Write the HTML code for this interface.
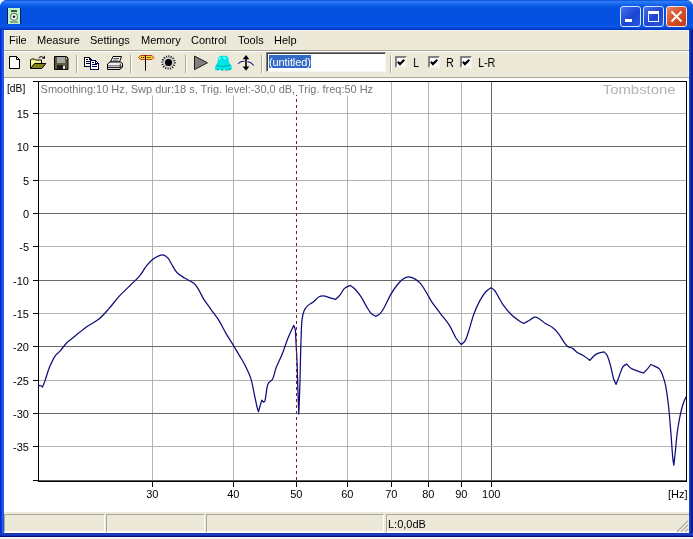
<!DOCTYPE html>
<html><head><meta charset="utf-8">
<style>
html,body{margin:0;padding:0;background:#f2f3fe;}
body{width:693px;height:539px;position:relative;overflow:hidden;font-family:"Liberation Sans",sans-serif;font-size:11px;color:#000;}
.abs{position:absolute;}
#win{left:0;top:0;width:693px;height:537px;background:linear-gradient(to right,#0424d4 0,#0424d4 1.300px,#2060f0 2px,#2060f0 3.200px,#1848c0 4px,#1848c0 688px,#2448c4 689px,#2040c0 690px,#0c20ac 691px,#0818a0 693px);border-radius:7px 7px 0 0;overflow:hidden;}
#title{left:0;top:0;width:693px;height:30px;background:linear-gradient(to bottom,#0a4cd6 0,#2a7af8 1.500px,#2272f4 3px,#0858e6 6px,#0450e0 9px,#0450e0 23px,#0856e8 26.500px,#0644d0 28.500px,#0030b0 30px);}
#client{left:4px;top:30px;width:685px;height:503px;background:#ece9d8;}
#menu{position:absolute;left:0;top:0;width:693px;height:52px;will-change:transform}
#menu span{position:absolute;top:34px;font-size:11px;white-space:nowrap;}
.btn{position:absolute;top:6px;width:19px;height:19px;border:1px solid #fff;border-radius:3px;}
#chart{left:4px;top:78px;width:685px;height:434px;background:#fff;}
.sp{position:absolute;top:514px;height:16px;border-top:1px solid #aca899;border-left:1px solid #aca899;border-right:1px solid #fff;border-bottom:2px solid #fff;box-sizing:content-box}
.sep{position:absolute;top:55px;width:1px;height:18px;background:#aca899;border-right:1px solid #fff;}
.cb{position:absolute;top:56px;width:8px;height:8px;background:#fff;border-top:2px solid;border-left:2px solid;border-right:2px solid;border-bottom:2px solid;border-color:#808080 #f4f2e8 #f4f2e8 #808080;}
.cb svg{position:absolute;left:0;top:0}
.cl{will-change:transform;position:absolute;top:56px;font-size:12.500px;line-height:14px;transform:scaleX(0.860);transform-origin:0 0;white-space:nowrap}
svg{will-change:transform}
svg text{font-family:"Liberation Sans",sans-serif;font-size:11px;fill:#000;}
</style></head><body>
<div id="win" class="abs">
<div id="title" class="abs"></div>
<!-- app icon -->
<svg class="abs" style="left:7px;top:8px" width="14" height="16" viewBox="0 0 14 16"><rect width="14" height="16" fill="#0a1a5a"/><rect x="1" width="12" height="16" fill="#b8f4c8"/><rect x="4" y="2" width="6" height="2" fill="#3a5a40"/><circle cx="7" cy="8.700" r="3.400" fill="#fbfffb" stroke="#6a8a70" stroke-width="1.200"/><circle cx="7" cy="8.700" r="1.300" fill="#101810"/><rect x="3" y="13" width="8" height="2" fill="#8aa88c"/></svg>
<!-- caption buttons -->
<div class="btn" style="left:620px;background:linear-gradient(135deg,#4870ec,#1c44d2 55%,#2858e0);border-color:#cfe6ff;"><div class="abs" style="left:4px;top:12px;width:7px;height:3px;background:#fff"></div></div>
<div class="btn" style="left:643px;background:linear-gradient(135deg,#4870ec,#1c44d2 55%,#2858e0);border-color:#cfe6ff;"><div class="abs" style="left:4px;top:4px;width:9px;height:7px;border:1px solid #fff;border-top:3px solid #fff"></div></div>
<div class="btn" style="left:666px;background:linear-gradient(135deg,#e88464,#d6502a 50%,#c43a14);border-color:#fbe4dc;"><svg class="abs" style="left:0;top:0" width="19" height="19"><path d="M4.500 4.500 L14.500 14.500 M14.500 4.500 L4.500 14.500" stroke="#fff" stroke-width="1.900"/></svg></div>
<div id="client" class="abs"></div>
<div class="abs" style="left:4px;top:30px;width:685px;height:1px;background:#f4f4fa"></div>
<div class="abs" style="left:4px;top:31px;width:1px;height:46px;background:#f6f4ec"></div>
<div class="abs" style="left:688px;top:30px;width:1px;height:47px;background:#f8f8f4"></div>
<div id="menu">
<span style="left:9px">File</span><span style="left:37px">Measure</span><span style="left:90px">Settings</span><span style="left:141px">Memory</span><span style="left:191px">Control</span><span style="left:238px">Tools</span><span style="left:274px">Help</span>
</div>
<div class="abs" style="left:4px;top:50px;width:685px;height:1px;background:#aca899"></div>
<div class="abs" style="left:4px;top:51px;width:685px;height:1px;background:#fff"></div>
<!-- toolbar -->
<svg class="abs" style="left:0;top:0" width="693" height="80" viewBox="0 0 693 80">
<!-- new -->
<path d="M9.5 56.5 h7 l3 3 v9 h-10 z" fill="#fff" stroke="#000" stroke-width="1"/>
<path d="M16.5 56.5 v3 h3" fill="none" stroke="#000" stroke-width="1"/>
<!-- open -->
<path d="M30.5 68 v-8 l1 -1 h3 l1 1 h6 v4" fill="#f4f490" stroke="#000" stroke-width="1"/>
<path d="M30.5 68.5 l4 -5 h11.3 l-4 5 z" fill="#80801c" stroke="#000" stroke-width="1"/>
<path d="M38.5 58 q3 -3 5.5 0.5" fill="none" stroke="#000" stroke-width="1"/>
<path d="M42 58.5 h3 v-3 z" fill="#000"/>
<!-- save -->
<path d="M54.5 56.5 h12 l1.500 1.5 v11.500 h-13.500 z" fill="#5c5c3a" stroke="#000" stroke-width="1"/>
<rect x="57" y="57" width="8" height="6" fill="#a8a8a8"/>
<rect x="57" y="65" width="8.500" height="4.500" fill="#1c1c14"/>
<rect x="63" y="65.500" width="2" height="3.500" fill="#e8e8e8"/>
<rect x="66" y="58" width="1" height="1" fill="#d0d0d0"/>
<!-- copy -->
<g shape-rendering="crispEdges">
<path d="M84.500 57.500 h5 l2 2 v7 h-7 z" fill="#fff" stroke="#000020" stroke-width="1"/>
<path d="M89.500 57.500 v2 h2" fill="none" stroke="#000020" stroke-width="1"/>
<path d="M86 59.500 h2 M86 61.500 h4 M86 63.500 h4" stroke="#000020" stroke-width="1"/>
<path d="M90.500 60.500 h5 l3 3 v6 h-8 z" fill="#fff" stroke="#000050" stroke-width="1"/>
<path d="M95.500 60.500 v3 h3" fill="none" stroke="#000050" stroke-width="1"/>
<path d="M92 62.500 h2 M92 64.500 h5 M92 66.500 h5" stroke="#000050" stroke-width="1"/>
</g>
<!-- print -->
<path d="M110.500 62 l2.500 -5.500 h8.500 l-2 5.500 z" fill="#fff" stroke="#000" stroke-width="1"/>
<path d="M113.500 58.500 h5.500 M112.800 60.200 h5.500" stroke="#404040" stroke-width="0.900"/>
<path d="M107.500 64 l2.500 -2 h10.500 l2 1.500 v3.500 l-2.500 2.500 h-12.500 z" fill="#f0f0f0" stroke="#000" stroke-width="1"/>
<path d="M108 65.800 h12.200" stroke="#808080" stroke-width="1.400"/>
<path d="M108 67.600 h12.200 l2 -2" fill="none" stroke="#000" stroke-width="0.900"/>
<path d="M120.300 63.500 v5.500" stroke="#000" stroke-width="0.800"/>
<!-- signpost -->
<path d="M138.500 57.500 l2 -2 h11.500 l2 2 l-2 2 h-11.500 z" fill="#ffd428" stroke="#c83818" stroke-width="1"/>
<path d="M141 57.500 h3.300 M147.300 57.500 h3.700" stroke="#402000" stroke-width="1" stroke-dasharray="1.300 0.700"/>
<rect x="145" y="55" width="1" height="15.700" fill="#100000"/>
<!-- dot -->
<circle cx="168.500" cy="62.500" r="6.300" fill="#cacaca" stroke="#181818" stroke-width="2" stroke-dasharray="1 1.400"/>
<circle cx="168.500" cy="62.500" r="3.500" fill="#000"/>
<!-- play -->
<path d="M194.500 56 l13 6.800 l-13 6.800 z" fill="#808080" stroke="#202020" stroke-width="1"/>
<!-- cyan blob -->
<path d="M218 59 q0.300 -3 3 -3.200 h4.500 q2.600 0.200 3 3.200 l0.800 4 q2.500 2.500 2.500 5 v1.500 h-2 l-0.800 1 h-2 l-0.800 -1 h-2.200 l-0.800 1 h-2 l-0.800 -1 h-2 l-0.800 1 h-1.500 l-1 -1 v-1.500 q0 -2.500 2.200 -5 z" fill="#00e6e6"/>
<path d="M216.500 65.500 q7 2 14 -0.500" stroke="#00a8a8" stroke-width="1" fill="none"/>
<path d="M217.500 69.500 h2 M221 70 h2 M225 70 h2 M228.500 69.500 h2" stroke="#009898" stroke-width="1"/>
<path d="M219.300 59.500 q0.200 -1.800 1.200 -2.200 M223 57.500 h2 M224.500 59 l1.200 -1" stroke="#b8ffff" stroke-width="1.200" fill="none"/>
<!-- updown arrow -->
<path d="M238 63.600 q3.500 -2.800 6.500 -2.300 M247.500 61.500 q3.500 0.500 6.300 4" fill="none" stroke="#1c1c8a" stroke-width="1.100"/>
<rect x="245.200" y="58" width="1.600" height="10" fill="#000"/>
<path d="M242.700 59.300 l3.300 -4.300 l3.300 4.300 z" fill="#000"/>
<path d="M242.700 66.500 l3.300 4.300 l3.300 -4.300 z" fill="#000"/>
</svg>

<div class="sep" style="left:76px"></div><div class="sep" style="left:130px"></div><div class="sep" style="left:185px"></div><div class="sep" style="left:261px"></div><div class="sep" style="left:390px"></div>
<div class="abs" style="left:266px;top:52px;width:118px;height:18px;background:#fff;border-top:1px solid #7f7f7f;border-left:1px solid #7f7f7f;border-right:1px solid #f4f4f0;border-bottom:1px solid #f4f4f0;box-shadow:inset 1px 1px 0 #404040;"><span class="abs" style="left:2px;top:2px;height:13px;width:42px;background:#316ac5"></span><span class="abs" style="left:2px;top:1.500px;height:14px;line-height:14px;letter-spacing:-0.100px;color:#fff;font-size:11px;will-change:transform">(untitled)</span></div>
<div class="cb" style="left:395px"><svg width="8" height="8"><path d="M0.800 3.800 L3 6.100 L7.300 1.700" fill="none" stroke="#000" stroke-width="2.200"/></svg></div><span class="cl" style="left:413px">L</span>
<div class="cb" style="left:428px"><svg width="8" height="8"><path d="M0.800 3.800 L3 6.100 L7.300 1.700" fill="none" stroke="#000" stroke-width="2.200"/></svg></div><span class="cl" style="left:446px">R</span>
<div class="cb" style="left:460px"><svg width="8" height="8"><path d="M0.800 3.800 L3 6.100 L7.300 1.700" fill="none" stroke="#000" stroke-width="2.200"/></svg></div><span class="cl" style="left:477.500px">L-R</span>
<div class="abs" style="left:4px;top:77px;width:685px;height:1px;background:#aca899"></div>
<div id="chart" class="abs"></div>
<svg class="abs" style="left:0;top:0" width="693" height="539" shape-rendering="crispEdges">
<line x1="152.5" y1="482" x2="152.5" y2="487" stroke="#000"/><line x1="152.5" y1="82" x2="152.5" y2="480" stroke="#b4b4b4"/><line x1="233.5" y1="482" x2="233.5" y2="487" stroke="#000"/><line x1="233.5" y1="82" x2="233.5" y2="480" stroke="#b4b4b4"/><line x1="296.5" y1="482" x2="296.5" y2="487" stroke="#000"/><line x1="347.5" y1="482" x2="347.5" y2="487" stroke="#000"/><line x1="347.5" y1="82" x2="347.5" y2="480" stroke="#b4b4b4"/><line x1="391.5" y1="482" x2="391.5" y2="487" stroke="#000"/><line x1="391.5" y1="82" x2="391.5" y2="480" stroke="#b4b4b4"/><line x1="428.5" y1="482" x2="428.5" y2="487" stroke="#000"/><line x1="428.5" y1="82" x2="428.5" y2="480" stroke="#b4b4b4"/><line x1="461.5" y1="482" x2="461.5" y2="487" stroke="#000"/><line x1="461.5" y1="82" x2="461.5" y2="480" stroke="#b4b4b4"/><line x1="491.5" y1="482" x2="491.5" y2="487" stroke="#000"/><line x1="491.5" y1="82" x2="491.5" y2="480" stroke="#6a6a6a"/><line x1="39" y1="113.5" x2="686" y2="113.5" stroke="#b4b4b4"/><line x1="33" y1="113.5" x2="38" y2="113.5" stroke="#000"/><line x1="39" y1="146.5" x2="686" y2="146.5" stroke="#6a6a6a"/><line x1="33" y1="146.5" x2="38" y2="146.5" stroke="#000"/><line x1="39" y1="180.5" x2="686" y2="180.5" stroke="#b4b4b4"/><line x1="33" y1="180.5" x2="38" y2="180.5" stroke="#000"/><line x1="39" y1="213.5" x2="686" y2="213.5" stroke="#6a6a6a"/><line x1="33" y1="213.5" x2="38" y2="213.5" stroke="#000"/><line x1="39" y1="246.5" x2="686" y2="246.5" stroke="#b4b4b4"/><line x1="33" y1="246.5" x2="38" y2="246.5" stroke="#000"/><line x1="39" y1="280.5" x2="686" y2="280.5" stroke="#6a6a6a"/><line x1="33" y1="280.5" x2="38" y2="280.5" stroke="#000"/><line x1="39" y1="313.5" x2="686" y2="313.5" stroke="#b4b4b4"/><line x1="33" y1="313.5" x2="38" y2="313.5" stroke="#000"/><line x1="39" y1="346.5" x2="686" y2="346.5" stroke="#6a6a6a"/><line x1="33" y1="346.5" x2="38" y2="346.5" stroke="#000"/><line x1="39" y1="380.5" x2="686" y2="380.5" stroke="#b4b4b4"/><line x1="33" y1="380.5" x2="38" y2="380.5" stroke="#000"/><line x1="39" y1="413.5" x2="686" y2="413.5" stroke="#6a6a6a"/><line x1="33" y1="413.5" x2="38" y2="413.5" stroke="#000"/><line x1="39" y1="446.5" x2="686" y2="446.5" stroke="#b4b4b4"/><line x1="33" y1="446.5" x2="38" y2="446.5" stroke="#000"/>
<rect x="33" y="81" width="654" height="1" fill="#000"/>
<rect x="38" y="81" width="1" height="401" fill="#000"/>
<rect x="686" y="81" width="1" height="401" fill="#000"/>
<rect x="33" y="480" width="5" height="1" fill="#000"/><rect x="39" y="480" width="647" height="1" fill="#5a5a5a"/><rect x="38" y="481" width="649" height="1" fill="#000"/>
</svg>
<svg class="abs" style="left:0;top:0" width="693" height="539">
<rect x="40" y="82.500" width="335" height="13" fill="#fff"/>
<path d="M38.3 386.1 C38.3 386.1 39.7 385.3 40.4 385.5 C41.2 385.7 42.5 387.0 42.5 387.0 C42.5 387.0 44.2 383.1 44.9 381.1 C46.5 376.7 47.5 372.1 49.3 367.7 C51.0 363.6 52.8 359.5 55.2 355.8 C56.3 354.0 58.3 353.0 59.7 351.4 C62.3 348.5 64.4 345.2 67.1 342.5 C69.4 340.2 72.1 338.5 74.6 336.5 C78.5 333.3 82.3 329.9 86.4 327.0 C90.2 324.3 94.7 322.5 98.3 319.6 C102.2 316.5 105.4 312.6 108.7 308.9 C112.3 304.9 115.4 300.4 119.1 296.4 C122.9 292.3 127.0 288.6 131.0 284.6 C134.0 281.6 137.2 278.8 139.9 275.6 C142.2 272.9 143.7 269.5 145.9 266.7 C147.9 264.2 150.0 261.7 152.5 259.6 C154.5 257.9 156.9 256.7 159.3 255.7 C160.7 255.1 162.4 254.7 163.8 255.1 C165.6 255.6 167.0 257.0 168.2 258.4 C170.1 260.7 171.1 263.6 172.7 266.1 C174.1 268.3 175.2 270.8 177.1 272.7 C179.3 274.9 182.0 276.4 184.6 278.0 C187.5 279.8 190.8 281.0 193.5 283.1 C195.3 284.5 196.7 286.5 197.9 288.4 C200.1 291.9 201.7 295.9 203.9 299.4 C206.2 303.0 208.8 306.3 211.3 309.8 C213.8 313.3 216.5 316.6 218.7 320.2 C221.4 324.5 223.5 329.2 226.1 333.6 C228.5 337.7 231.1 341.6 233.6 345.6 C235.4 348.6 237.1 351.6 238.9 354.6 C240.9 358.1 243.1 361.4 244.9 365.0 C247.1 369.4 249.3 373.8 250.8 378.4 C252.5 383.7 253.2 389.3 254.4 394.7 C255.4 399.2 256.2 403.7 257.3 408.1 C257.6 409.3 258.5 411.7 258.5 411.7 C258.5 411.7 259.7 407.3 260.3 405.1 C260.8 403.4 261.8 400.1 261.8 400.1 C261.8 400.1 263.6 402.2 263.6 402.2 C263.6 402.2 264.8 401.4 265.0 400.7 C266.0 396.3 266.2 391.7 267.1 387.3 C267.4 385.8 267.7 384.2 268.6 382.9 C269.6 381.4 271.7 380.9 272.5 379.3 C274.3 375.8 274.6 371.7 276.0 368.0 C277.8 363.4 280.2 359.1 282.0 354.6 C284.1 349.2 285.8 343.7 287.9 338.3 C289.1 335.3 290.4 332.3 291.8 329.4 C292.4 328.0 293.9 325.4 293.9 325.4 C293.9 325.4 295.1 328.4 295.3 330.0 C295.8 333.5 295.7 337.1 295.9 340.6 C296.3 348.1 296.8 355.5 297.1 363.0 C297.4 371.2 297.5 379.3 297.8 387.5 C298.1 396.3 298.8 414.0 298.8 414.0 C298.8 414.0 299.5 396.3 299.8 387.5 C300.1 379.3 300.2 371.2 300.4 363.0 C300.6 355.5 300.7 348.1 301.0 340.6 C301.3 333.7 301.3 326.8 302.0 320.0 C302.3 316.8 303.0 313.5 304.2 310.5 C305.0 308.6 306.3 307.0 307.8 305.6 C309.4 304.1 311.5 303.4 313.2 302.1 C315.3 300.5 316.7 297.9 319.1 296.7 C320.9 295.8 323.0 295.9 325.0 296.1 C327.1 296.4 329.0 297.6 331.0 298.2 C332.4 298.7 335.4 299.4 335.4 299.4 C335.4 299.4 338.6 296.8 339.9 295.2 C341.6 293.1 342.5 290.3 344.5 288.4 C346.1 286.9 350.4 285.4 350.4 285.4 C350.4 285.4 353.6 287.6 354.9 289.0 C357.1 291.3 359.1 293.8 360.8 296.4 C363.0 299.7 364.6 303.4 366.7 306.8 C368.1 309.1 369.4 311.5 371.2 313.4 C372.4 314.7 375.6 316.3 375.6 316.3 C375.6 316.3 378.9 315.0 380.1 313.7 C382.0 311.7 383.3 309.2 384.6 306.8 C386.7 302.9 388.3 298.8 390.5 294.9 C392.3 291.8 394.2 288.8 396.4 286.0 C398.2 283.7 400.1 281.3 402.4 279.5 C404.1 278.2 406.1 277.0 408.3 276.8 C410.4 276.6 412.5 277.6 414.3 278.6 C416.5 279.8 418.6 281.2 420.2 283.1 C422.6 285.8 424.2 289.0 426.1 292.0 C428.2 295.4 429.9 299.1 432.1 302.4 C434.9 306.5 438.0 310.3 441.0 314.3 C444.0 318.2 447.3 321.9 449.9 326.1 C452.3 329.9 453.6 334.2 455.9 338.0 C457.4 340.4 461.3 344.5 461.3 344.5 C461.3 344.5 464.5 342.1 465.4 340.4 C467.2 336.9 468.1 332.9 469.3 329.1 C470.9 324.2 472.0 319.1 473.8 314.3 C475.5 309.7 477.4 305.2 479.7 300.9 C481.4 297.8 483.3 294.7 485.6 292.0 C487.1 290.3 491.0 287.8 491.0 287.8 C491.0 287.8 493.7 289.3 494.6 290.5 C496.4 292.7 497.5 295.4 499.0 297.9 C500.5 300.4 501.8 303.0 503.5 305.3 C505.8 308.4 508.2 311.5 510.9 314.3 C513.1 316.5 515.7 318.4 518.3 320.2 C520.0 321.4 523.7 323.5 523.7 323.5 C523.7 323.5 527.1 321.7 528.7 320.8 C530.7 319.6 532.3 317.7 534.6 317.2 C536.1 316.9 537.7 317.9 539.1 318.7 C541.2 319.9 542.9 321.8 545.0 323.2 C547.4 324.8 550.2 325.8 552.5 327.6 C554.7 329.3 556.7 331.4 558.4 333.6 C560.8 336.6 562.5 340.0 564.7 343.1 C565.6 344.4 566.6 345.7 567.9 346.6 C569.3 347.5 571.2 347.5 572.6 348.4 C574.4 349.5 575.6 351.4 577.3 352.5 C579.3 353.8 581.6 354.4 583.6 355.7 C585.8 357.1 589.9 360.4 589.9 360.4 C589.9 360.4 593.7 355.6 596.2 354.1 C598.5 352.7 604.1 351.9 604.1 351.9 C604.1 351.9 606.6 354.2 607.3 355.7 C608.7 358.7 609.5 362.0 610.4 365.2 C611.6 369.7 612.3 374.3 613.6 378.7 C614.2 380.7 616.1 384.4 616.1 384.4 C616.1 384.4 618.1 378.9 619.2 376.2 C620.4 373.0 621.2 369.6 623.0 366.7 C623.8 365.4 626.8 364.2 626.8 364.2 C626.8 364.2 629.3 367.3 630.9 368.3 C632.8 369.5 635.1 370.0 637.2 370.8 C639.3 371.6 643.5 373.0 643.5 373.0 C643.5 373.0 645.7 371.0 646.7 369.9 C648.2 368.2 650.8 364.5 650.8 364.5 C650.8 364.5 653.3 365.5 654.5 366.1 C656.1 367.0 658.0 367.5 659.3 368.9 C660.8 370.5 661.6 372.6 662.4 374.6 C663.7 378.2 664.9 381.8 665.6 385.6 C667.0 392.9 667.9 400.3 668.7 407.7 C669.6 416.1 670.2 424.5 670.9 432.9 C671.6 441.3 672.0 449.7 672.8 458.1 C673.0 460.4 673.8 465.1 673.8 465.1 C673.8 465.1 674.6 458.4 675.0 455.0 C675.8 447.6 676.3 440.2 677.2 432.9 C677.9 427.6 678.8 422.4 679.8 417.2 C680.7 412.9 681.6 408.7 682.9 404.5 C683.7 401.8 686.1 396.7 686.1 396.7" fill="none" stroke="#0e0e78" stroke-width="1.25" stroke-linejoin="round"/>
<line x1="296.500" y1="95" x2="296.500" y2="481" stroke="#8a1430" stroke-width="1" stroke-dasharray="3 3" stroke-dashoffset="2" shape-rendering="crispEdges"/>
<text x="29" y="117.8" text-anchor="end">15</text><text x="29" y="150.8" text-anchor="end">10</text><text x="29" y="184.8" text-anchor="end">5</text><text x="29" y="217.8" text-anchor="end">0</text><text x="29" y="250.8" text-anchor="end">-5</text><text x="29" y="284.8" text-anchor="end">-10</text><text x="29" y="317.8" text-anchor="end">-15</text><text x="29" y="350.8" text-anchor="end">-20</text><text x="29" y="384.8" text-anchor="end">-25</text><text x="29" y="417.8" text-anchor="end">-30</text><text x="29" y="450.8" text-anchor="end">-35</text><text x="152.3" y="497.600" text-anchor="middle">30</text><text x="233.3" y="497.600" text-anchor="middle">40</text><text x="296.3" y="497.600" text-anchor="middle">50</text><text x="347.3" y="497.600" text-anchor="middle">60</text><text x="391.3" y="497.600" text-anchor="middle">70</text><text x="428.3" y="497.600" text-anchor="middle">80</text><text x="461.3" y="497.600" text-anchor="middle">90</text><text x="491.3" y="497.600" text-anchor="middle">100</text>
<text x="7" y="92.300" textLength="18.300" lengthAdjust="spacingAndGlyphs">[dB]</text>
<text x="668" y="498">[Hz]</text>
<text x="40.600" y="93" textLength="332.500" lengthAdjust="spacing" style="fill:#767676">Smoothing:10 Hz, Swp dur:18 s, Trig. level:-30,0 dB, Trig. freq:50 Hz</text>
<text x="602.800" y="93.600" textLength="72.700" lengthAdjust="spacingAndGlyphs" style="font-size:12.500px;fill:#b4b4b4">Tombstone</text>
</svg>
<!-- status bar -->
<div class="abs" style="left:0;top:533px;width:693px;height:4px;background:linear-gradient(to bottom,#183c9c 0,#1c3cc4 1.500px,#1430b4 2.500px,#00046c 4px)"></div>
<div class="abs" style="left:4px;top:512px;width:685px;height:21px;background:#ece9d8"></div>
<div class="sp" style="left:4px;width:99px"></div>
<div class="sp" style="left:106px;width:97px"></div>
<div class="sp" style="left:206px;width:176px"></div>
<div class="sp" style="left:386px;width:302px;border-right:none"></div>
<svg class="abs" style="left:676px;top:520px" width="13" height="13"><path d="M1 12 L12 1 M5 12 L12 5 M9 12 L12 9" stroke="#aca899" stroke-width="1.300"/><path d="M2 12.500 L12.500 2 M6 12.500 L12.500 6 M10 12.500 L12.500 10" stroke="#fff" stroke-width="0.800"/></svg>
<div class="abs" style="left:387.500px;top:518px;font-size:11px;will-change:transform">L:0,0dB</div>
</div>
</body></html>
